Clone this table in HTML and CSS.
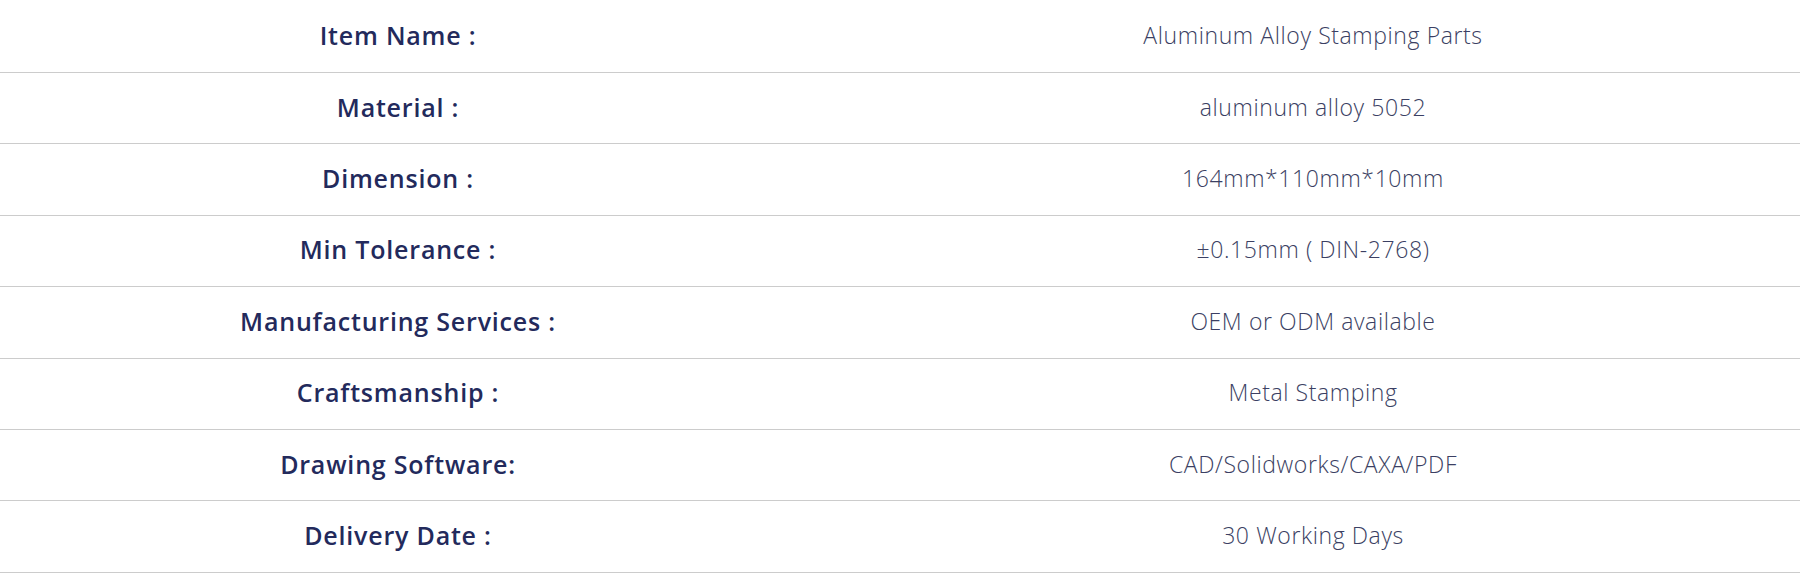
FILE: index.html
```html
<!DOCTYPE html>
<html>
<head>
<meta charset="utf-8">
<link rel="stylesheet" href="styles.css">
</head>
<body>
<div class="spec">
  <div class="row"><div class="label">Item Name :</div><div class="value">Aluminum Alloy Stamping Parts</div></div>
  <div class="row"><div class="label">Material :</div><div class="value">aluminum alloy 5052</div></div>
  <div class="row"><div class="label">Dimension :</div><div class="value">164mm*110mm*10mm</div></div>
  <div class="row"><div class="label">Min Tolerance :</div><div class="value">±0.15mm ( DIN-2768)</div></div>
  <div class="row"><div class="label">Manufacturing Services :</div><div class="value">OEM or ODM available</div></div>
  <div class="row"><div class="label">Craftsmanship :</div><div class="value">Metal Stamping</div></div>
  <div class="row"><div class="label">Drawing Software:</div><div class="value">CAD/Solidworks/CAXA/PDF</div></div>
  <div class="row"><div class="label">Delivery Date :</div><div class="value">30 Working Days</div></div>
</div>
</body>
</html>
```
FILE: styles.css
```css
html, body {
  margin: 0;
  padding: 0;
  background: #ffffff;
}
body {
  font-family: "Open Sans", Roboto, "Liberation Sans", sans-serif;
  overflow: hidden;
}
.spec {
  display: flex;
  flex-direction: column;
  width: 1800px;
  padding-top: 1.5px;
}
.row {
  display: grid;
  grid-template-columns: 796px 1fr;
  height: 71.43px;
  box-sizing: border-box;
  border-bottom: 1px solid #cccccc;
  align-items: center;
}
.label {
  text-align: center;
  font-weight: 600;
  font-size: 25px;
  letter-spacing: 0.8px;
  line-height: 30px;
  color: #232a5c;
  padding-bottom: 3px;
}
.value {
  text-align: center;
  padding-left: 30px;
  font-weight: 300;
  font-size: 23px;
  letter-spacing: 0.6px;
  line-height: 30px;
  color: #3b3f63;
  padding-bottom: 3px;
}
```
